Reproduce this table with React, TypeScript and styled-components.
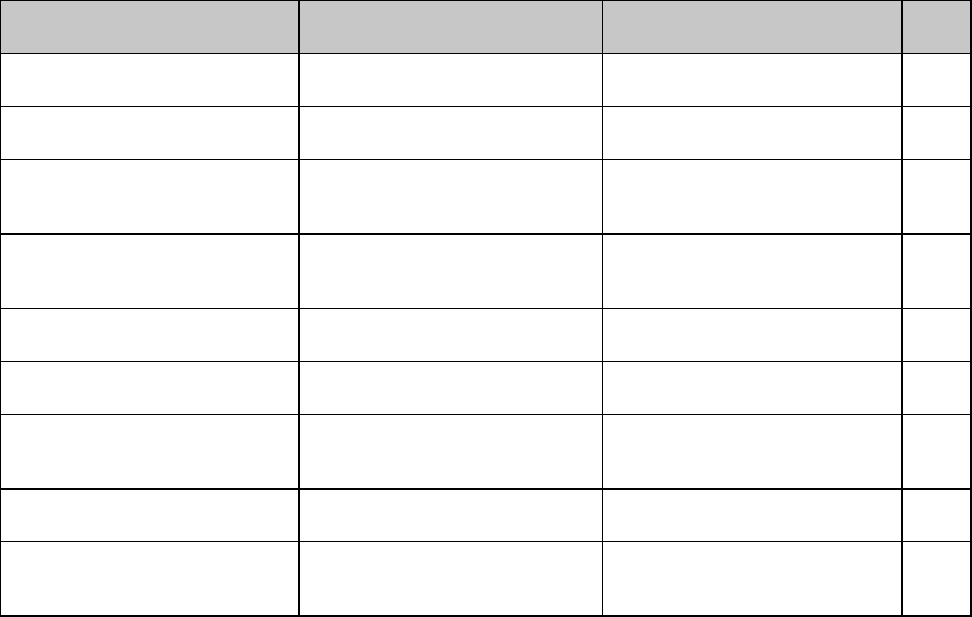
import React from "react";
import styled, { createGlobalStyle } from "styled-components";

const GlobalStyle = createGlobalStyle`
  html, body {
    margin: 0;
    padding: 0;
    background: #ffffff;
    font-family: "Liberation Sans", Arial, sans-serif;
  }
  *, *::before, *::after {
    box-sizing: border-box;
  }
`;

// widths of each column, right border included
const columns = [
  { width: 299, border: 2 },
  { width: 303, border: 1 },
  { width: 300, border: 2 },
  { width: 69, border: 2 },
];

// height of each row, bottom border included
const rows = [
  { height: 53, border: 1, header: true },
  { height: 53, border: 1 },
  { height: 53, border: 1 },
  { height: 75, border: 2 },
  { height: 74, border: 1 },
  { height: 53, border: 1 },
  { height: 53, border: 1 },
  { height: 75, border: 2 },
  { height: 52, border: 1 },
  { height: 75, border: 2 },
];

const Table = styled.div`
  display: flex;
  flex-direction: column;
  width: 972px;
  border-top: 1px solid #000;
  border-left: 1px solid #000;
  background: #fff;
`;

const Row = styled.div<{ $height: number }>`
  display: grid;
  grid-template-columns: ${columns.map((c) => `${c.width}px`).join(" ")};
  height: ${({ $height }) => $height}px;
`;

const Cell = styled.div<{ $right: number; $bottom: number; $header?: boolean }>`
  border-right: ${({ $right }) => $right}px solid #000;
  border-bottom: ${({ $bottom }) => $bottom}px solid #000;
  background: ${({ $header }) => ($header ? "#c7c7c7" : "#ffffff")};
  padding: 4px 6px;
  font-size: 14px;
  color: #000;
`;

const App = () => {
  return (
    <>
      <GlobalStyle />
      <Table>
        {rows.map((row, r) => (
          <Row key={r} $height={row.height}>
            {columns.map((col, c) => (
              <Cell
                key={c}
                $right={col.border}
                $bottom={row.border}
                $header={row.header}
              />
            ))}
          </Row>
        ))}
      </Table>
    </>
  );
};

export default App;
